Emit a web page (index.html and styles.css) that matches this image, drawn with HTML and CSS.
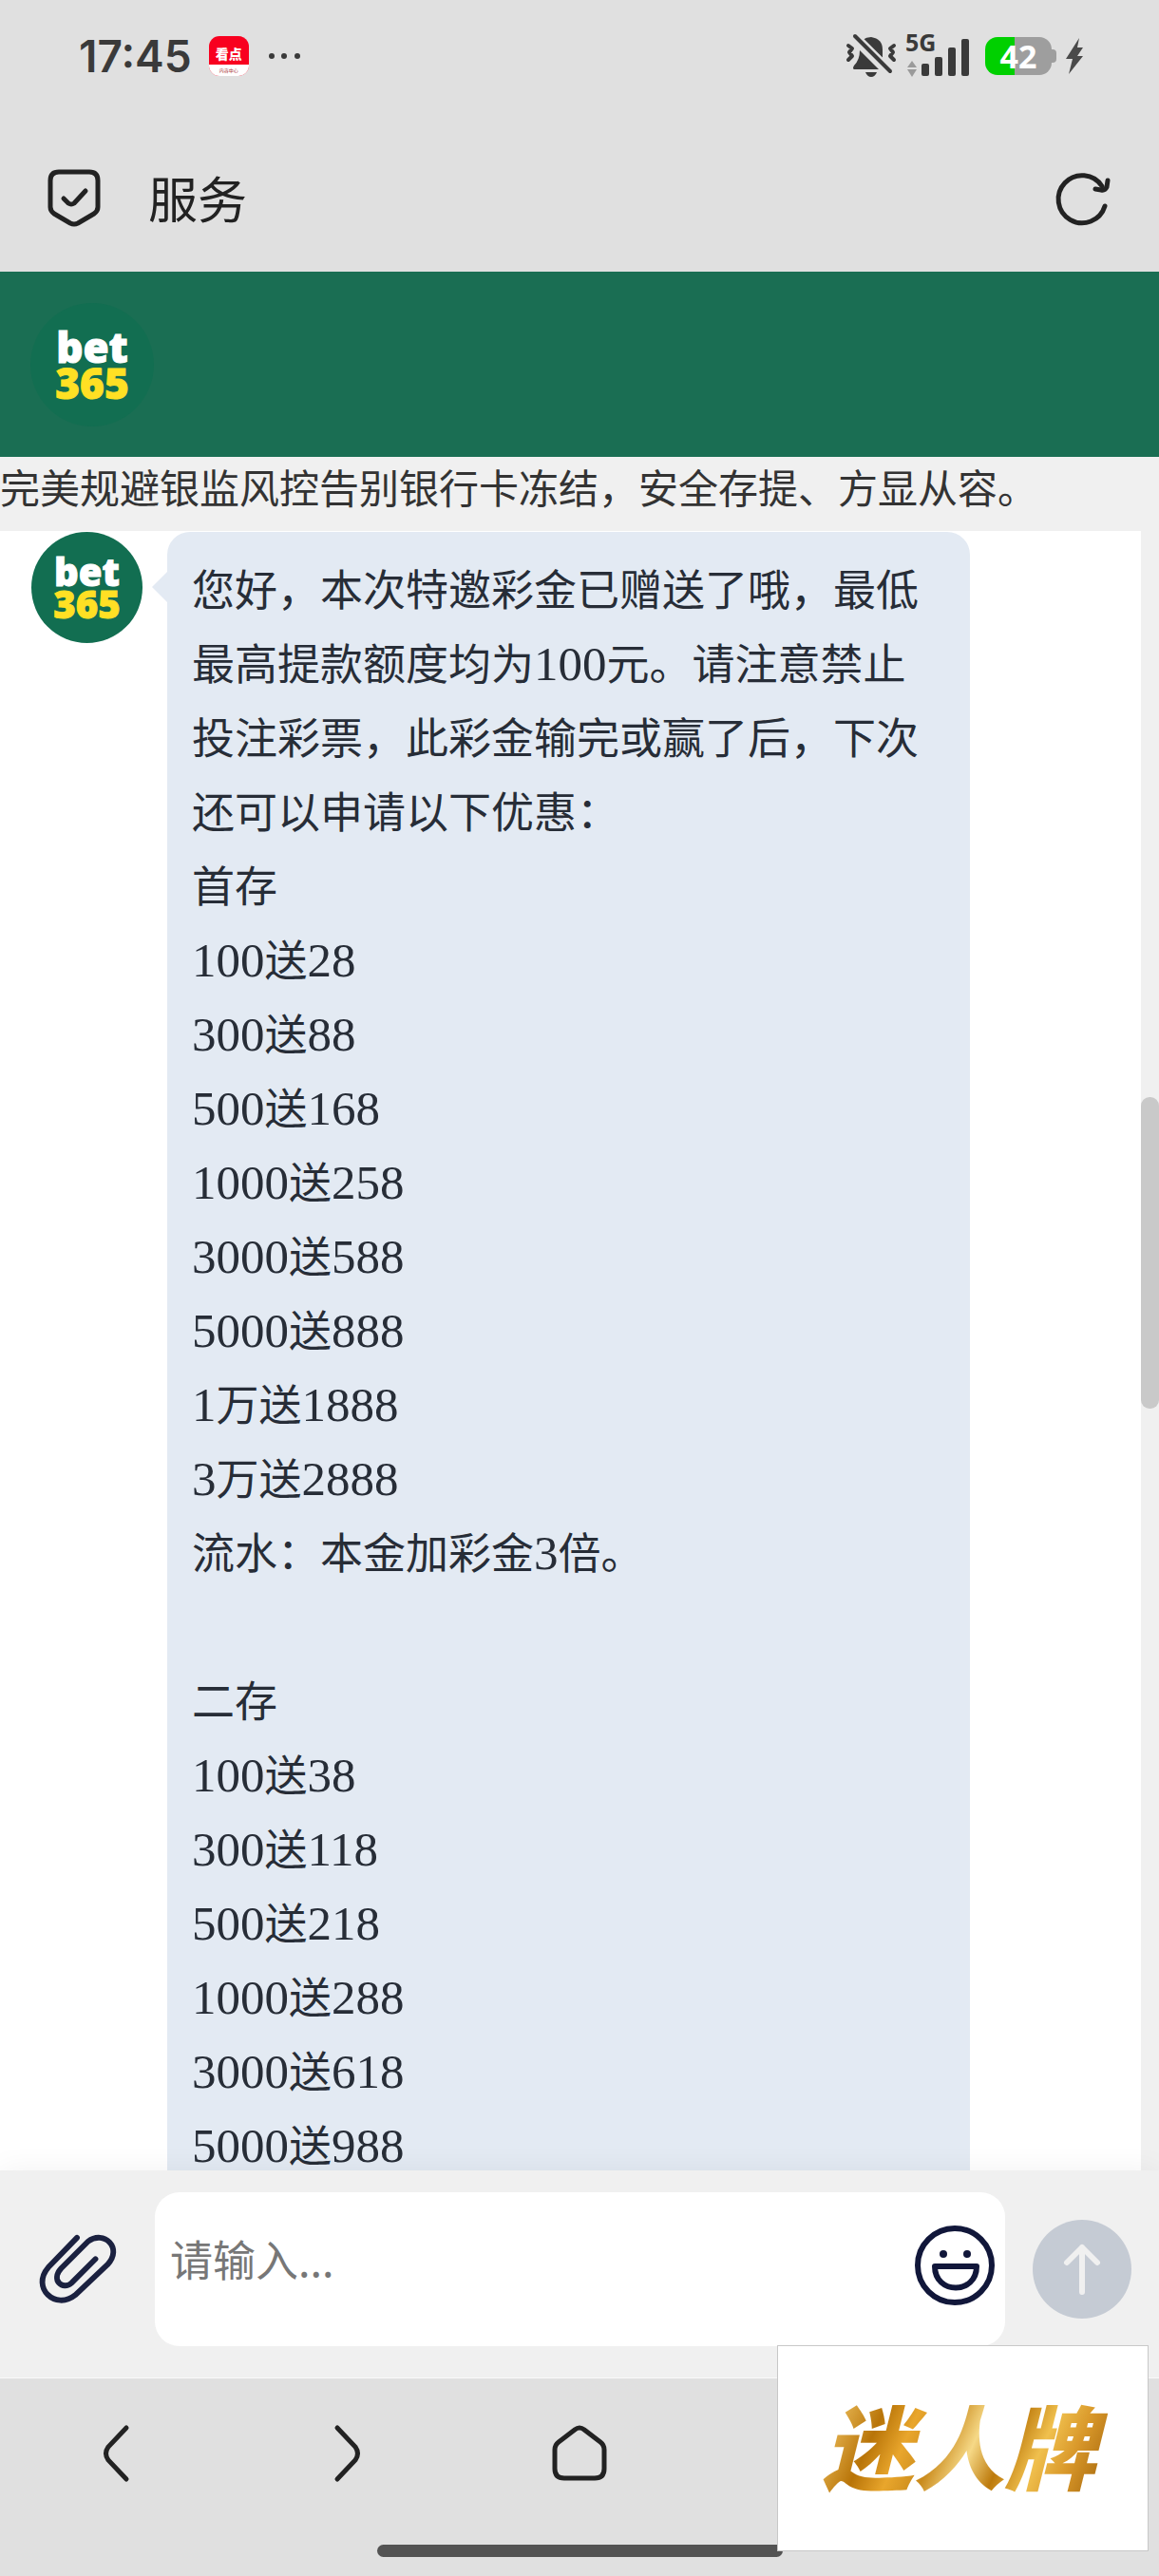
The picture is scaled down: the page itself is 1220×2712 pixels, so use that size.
FILE: index.html
```html
<!DOCTYPE html>
<html lang="zh-CN">
<head>
    <meta charset="UTF-8">
    <meta name="viewport" content="width=device-width, initial-scale=1.0">
    <title>服务</title>
    <link rel="stylesheet" href="styles.css">
</head>
<body>
    <div class="status-bar">
        <span class="clock">17:45</span>
        <span class="app-badge">
            <span class="app-name">看点</span>
            <span class="app-sub">内容中心</span>
        </span>
        <svg class="dots" width="34" height="8" viewBox="0 0 34 8" fill="#3a3a3a">
            <circle cx="4" cy="4" r="3"/><circle cx="17" cy="4" r="3"/><circle cx="31" cy="4" r="3"/>
        </svg>
        <div class="status-right">
            <svg class="bell" width="52" height="48" viewBox="0 0 52 48" fill="#3a3a3a">
                <path d="M17 7 Q21 4 26 4 Q38 6 38 17 L38 26 Z"/>
                <path d="M14 18 L34 38 L8 38 Q6 37 8 34 Q14 28 14 18 Z"/>
                <path d="M20 41 H32 Q30 46 26 46 Q22 46 20 41 Z"/>
                <path d="M9 3 L46 40" stroke="#e0e0e0" stroke-width="9"/>
                <path d="M9 3 L46 40" stroke="#3a3a3a" stroke-width="4" stroke-linecap="round"/>
                <path d="M2 13 L6 16 L3 20 L6 24 L2 28 M50 13 L46 16 L49 20 L46 24 L50 28" fill="none" stroke="#3a3a3a" stroke-width="4" stroke-linecap="round" stroke-linejoin="round"/>
            </svg>
            <svg class="signal" width="68" height="48" viewBox="0 0 68 48">
                <text class="signal-label" x="0" y="19">5G</text>
                <path d="M7 29 L12 36 H2 Z M2 38 H12 L7 46 Z" fill="#9a9a9a"/>
                <g fill="#3a3a3a">
                    <rect x="17" y="32" width="8" height="13" rx="2"/>
                    <rect x="31" y="25" width="8" height="20" rx="2"/>
                    <rect x="45" y="15" width="8" height="30" rx="2"/>
                    <rect x="59" y="6" width="8" height="39" rx="2"/>
                </g>
            </svg>
            <span class="battery">42</span>
            <svg class="bolt" width="20" height="38" viewBox="0 0 20 38" fill="#4a4a4a">
                <path d="M15 0 L1 22 H8 L4 38 L19 19 H13 L19 10 H13 Z"/>
            </svg>
        </div>
    </div>

    <header class="title-bar">
        <svg width="56" height="60" viewBox="0 0 56 60" fill="none" stroke="#222" stroke-width="5" stroke-linecap="round" stroke-linejoin="round">
            <path d="M12 3 H44 Q53 3 53 12 V40 Q53 44 49 47 L32 57 Q28 59 24 57 L7 47 Q3 44 3 40 V12 Q3 3 12 3 Z"/>
            <path d="M17 31 L22 36 Q25 38 28 36 L40 23"/>
        </svg>
        <h1>服务</h1>
        <button class="icon-btn" aria-label="刷新">
            <svg width="56" height="56" viewBox="0 0 56 56" fill="none" stroke="#222" stroke-width="5" stroke-linecap="round" stroke-linejoin="round">
                <path d="M51 37 A25 25 0 1 1 48 16"/>
                <path d="M54 10 L53 17 Q51 21 47 20 L41 19"/>
            </svg>
        </button>
    </header>

    <div class="brand-bar">
        <div class="logo logo-large"><span>bet</span><span class="logo-num">365</span></div>
    </div>

    <div class="notice">完美规避银监风控告别银行卡冻结，安全存提、方显从容。</div>

    <main class="chat">
        <div class="messages">
            <div class="logo"><span>bet</span><span class="logo-num">365</span></div>
            <div class="bubble">
                <p>您好，本次特邀彩金已赠送了哦，最低最高提款额度均为<span class="num">100</span>元。请注意禁止投注彩票，此彩金输完或赢了后，下次还可以申请以下优惠：</p>
                <p>首存</p>
                <p><span class="num">100</span>送<span class="num">28</span></p>
                <p><span class="num">300</span>送<span class="num">88</span></p>
                <p><span class="num">500</span>送<span class="num">168</span></p>
                <p><span class="num">1000</span>送<span class="num">258</span></p>
                <p><span class="num">3000</span>送<span class="num">588</span></p>
                <p><span class="num">5000</span>送<span class="num">888</span></p>
                <p><span class="num">1</span>万送<span class="num">1888</span></p>
                <p><span class="num">3</span>万送<span class="num">2888</span></p>
                <p>流水：本金加彩金<span class="num">3</span>倍。</p>
                <p><br></p>
                <p>二存</p>
                <p><span class="num">100</span>送<span class="num">38</span></p>
                <p><span class="num">300</span>送<span class="num">118</span></p>
                <p><span class="num">500</span>送<span class="num">218</span></p>
                <p><span class="num">1000</span>送<span class="num">288</span></p>
                <p><span class="num">3000</span>送<span class="num">618</span></p>
                <p><span class="num">5000</span>送<span class="num">988</span></p>
            </div>
        </div>
        <div class="scroll-track"><div class="scroll-thumb"></div></div>
    </main>

    <form class="composer">
        <button type="button" class="icon-btn" aria-label="附件">
            <svg width="82" height="74" viewBox="0 0 84 76" fill="none" stroke="#1b2140" stroke-width="6" stroke-linecap="round" stroke-linejoin="round">
                <path d="M41 4 L10 36 C-9 58 18 83 39 66 L74 33 C91 15 70 -5 53 8 L24 37 C12 50 26 61 35 53 L61 27"/>
            </svg>
        </button>
        <div class="input-box">
            <textarea aria-label="消息" placeholder="请输入..."></textarea>
            <button type="button" class="icon-btn" aria-label="表情">
                <svg width="84" height="84" viewBox="0 0 84 84" fill="none" stroke="#11173a" stroke-width="6" stroke-linejoin="round">
                    <circle cx="42" cy="42" r="39"/>
                    <path d="M21 43 H65 C65 73 21 73 21 43 Z"/>
                    <circle cx="30" cy="30" r="4" fill="#11173a" stroke="none"/>
                    <circle cx="55" cy="30" r="4" fill="#11173a" stroke="none"/>
                </svg>
            </button>
        </div>
        <button type="submit" class="send-btn" aria-label="发送">
            <svg width="40" height="54" viewBox="0 0 40 54" fill="none" stroke="#f0f0f0" stroke-width="6" stroke-linecap="round" stroke-linejoin="round">
                <path d="M20 51 V4 M4 20 L20 4 L36 20"/>
            </svg>
        </button>
    </form>

    <nav class="browser-nav">
        <div class="nav-buttons">
            <button class="icon-btn" aria-label="后退">
                <svg width="28" height="60" viewBox="0 0 28 60" fill="none" stroke="#222" stroke-width="5" stroke-linecap="round">
                    <path d="M25 3 L6 23 Q1 30 6 37 L25 57"/>
                </svg>
            </button>
            <button class="icon-btn" aria-label="前进">
                <svg width="28" height="60" viewBox="0 0 28 60" fill="none" stroke="#222" stroke-width="5" stroke-linecap="round">
                    <path d="M3 3 L22 23 Q27 30 22 37 L3 57"/>
                </svg>
            </button>
            <button class="icon-btn" aria-label="主页">
                <svg width="58" height="60" viewBox="0 0 58 60" fill="none" stroke="#222" stroke-width="5" stroke-linejoin="round">
                    <path d="M24 5 Q29 1 34 5 L51 18 Q55 21 55 26 V46 Q55 56 45 56 H13 Q3 56 3 46 V26 Q3 21 7 18 Z"/>
                </svg>
            </button>
        </div>
        <div class="home-line"></div>
        <div class="watermark"><span>迷人牌</span></div>
    </nav>
</body>
</html>
```
FILE: styles.css
```css
* {
    box-sizing: border-box;
    margin: 0;
    padding: 0;
}

body {
    display: flex;
    flex-direction: column;
    height: 100vh;
    overflow: hidden;
    background-color: #e0e0e0;
    color: #333;
    font-family: 'Noto Sans CJK SC', sans-serif;
}

svg {
    display: block;
    flex: none;
    overflow: visible;
}

.icon-btn {
    border: none;
    background: none;
    cursor: pointer;
}

/* Status bar */
.status-bar {
    display: flex;
    align-items: center;
    height: 118px;
    padding: 0 79px 0 83px;
}

.clock {
    color: #3a3a3a;
    font-family: Inter, sans-serif;
    font-size: 46px;
    font-weight: 600;
}

.app-badge {
    display: flex;
    flex-direction: column;
    justify-content: flex-end;
    width: 42px;
    height: 42px;
    margin-left: 18px;
    border-radius: 11px;
    overflow: hidden;
    background-color: #f8001f;
    color: white;
    text-align: center;
}

.app-name {
    font-size: 14px;
    font-weight: 900;
    line-height: 24px;
}

.app-sub {
    background-color: white;
    color: #a33;
    font-size: 5px;
    line-height: 12px;
}

.dots {
    margin-left: 20px;
}

.status-right {
    display: flex;
    align-items: center;
    margin-left: auto;
}

.signal {
    margin-left: 10px;
}

.signal-label {
    fill: #3a3a3a;
    font-family: 'Noto Sans', sans-serif;
    font-size: 25px;
    font-weight: 700;
}

.battery {
    position: relative;
    width: 70px;
    height: 40px;
    margin-left: 16px;
    border-radius: 13px;
    background: linear-gradient(to right, #00d000 45%, #9e9e9e 45%);
    color: white;
    font-family: 'Noto Sans', sans-serif;
    font-size: 34px;
    font-weight: 700;
    line-height: 40px;
    text-align: center;
}

.battery::after {
    content: '';
    position: absolute;
    top: 13px;
    right: -5px;
    width: 6px;
    height: 14px;
    border-radius: 0 4px 4px 0;
    background-color: #9e9e9e;
}

.bolt {
    margin-left: 14px;
}

/* Page title */
.title-bar {
    display: flex;
    align-items: center;
    height: 168px;
    padding: 12px 52px 0 50px;
}

.title-bar h1 {
    margin-left: 50px;
    color: #222;
    font-size: 52px;
    font-weight: 400;
    line-height: 72px;
}

.title-bar .icon-btn {
    margin-left: auto;
}

/* Brand */
.brand-bar {
    display: flex;
    align-items: center;
    height: 195px;
    padding: 0 32px;
    background-color: #1a6e53;
}

.logo {
    display: flex;
    flex: none;
    flex-direction: column;
    align-items: center;
    justify-content: center;
    width: 117px;
    height: 117px;
    border-radius: 50%;
    background-color: #126e51;
    color: white;
    font-family: 'Open Sans', sans-serif;
    font-size: 40px;
    font-weight: 800;
    line-height: 34px;
    -webkit-text-stroke: 1px currentColor;
}

.logo-large {
    width: 130px;
    height: 130px;
    font-size: 44px;
    line-height: 38px;
}

.logo-num {
    color: #ffe024;
}

.notice {
    height: 78px;
    background-color: #f0f0f0;
    font-size: 42px;
    line-height: 62px;
    white-space: nowrap;
    overflow: hidden;
}

/* Chat */
.chat {
    display: flex;
    flex: 1;
    min-height: 0;
    background-color: white;
}

.messages {
    display: flex;
    flex: 1;
    align-items: flex-start;
    gap: 26px;
    padding: 1px 180px 0 33px;
    overflow: hidden;
}

.bubble {
    position: relative;
    flex: 1;
    padding: 20px 26px 40px;
    border-radius: 24px;
    background-color: #e3eaf3;
    color: #272d37;
    font-size: 45px;
    line-height: 78px;
}

.bubble::before {
    content: '';
    position: absolute;
    top: 42px;
    left: -16px;
    border: 16px solid transparent;
    border-left-width: 0;
    border-right-color: #e3eaf3;
}

.num {
    font-family: 'Liberation Serif', serif;
    font-size: 51px;
    line-height: 1;
}

.scroll-track {
    width: 19px;
    background-color: #f0f0f0;
}

.scroll-thumb {
    height: 19%;
    margin-top: 596px;
    border-radius: 9px;
    background-color: #c9c9c9;
}

/* Message input */
.composer {
    position: relative;
    display: flex;
    align-items: center;
    padding: 23px 29px 33px 41px;
    border-bottom: 1px solid #fafafa;
    background-color: #f0f0f0;
    box-shadow: 0 0 30px rgba(0, 0, 0, 0.06);
}

.input-box {
    display: flex;
    flex: 1;
    align-items: center;
    height: 162px;
    margin: 0 29px 0 40px;
    padding: 0 11px 8px 0;
    border-radius: 26px;
    background-color: white;
}

.input-box textarea {
    flex: 1;
    height: 150px;
    padding: 34px 16px 0;
    border: none;
    outline: none;
    resize: none;
    background: none;
    font-family: inherit;
    font-size: 45px;
    line-height: 68px;
}

.input-box textarea::placeholder {
    color: #777;
}

.send-btn {
    display: flex;
    align-items: center;
    justify-content: center;
    width: 104px;
    height: 104px;
    border: none;
    border-radius: 50%;
    background-color: #c5cbd4;
    cursor: pointer;
}

/* Browser navigation */
.browser-nav {
    position: relative;
    height: 208px;
    padding-top: 49px;
    background-color: #e0e0e0;
}

.nav-buttons {
    display: grid;
    grid-template-columns: repeat(5, 1fr);
    justify-items: center;
}

.home-line {
    width: 35%;
    height: 13px;
    margin: 66px auto 0;
    border-radius: 7px;
    background-color: #535353;
}

.watermark {
    position: absolute;
    right: 11px;
    bottom: 26px;
    display: flex;
    align-items: center;
    justify-content: center;
    width: 391px;
    height: 217px;
    padding: 0 8px 10px 0;
    border: 1px solid #c8c8c8;
    background-color: white;
}

.watermark span {
    padding: 0 12px;
    background: linear-gradient(115deg, #a66a08, #e3b04c 12%, #b87408 24%, #e9a62c 34%, #c98a1c 44%, #f6d987 54%, #bd7a0c 64%, #f0c04e 74%, #d9982a 84%, #9a5c06);
    -webkit-background-clip: text;
    background-clip: text;
    color: transparent;
    font-size: 96px;
    font-style: italic;
    font-weight: 900;
    line-height: 120px;
}
```
